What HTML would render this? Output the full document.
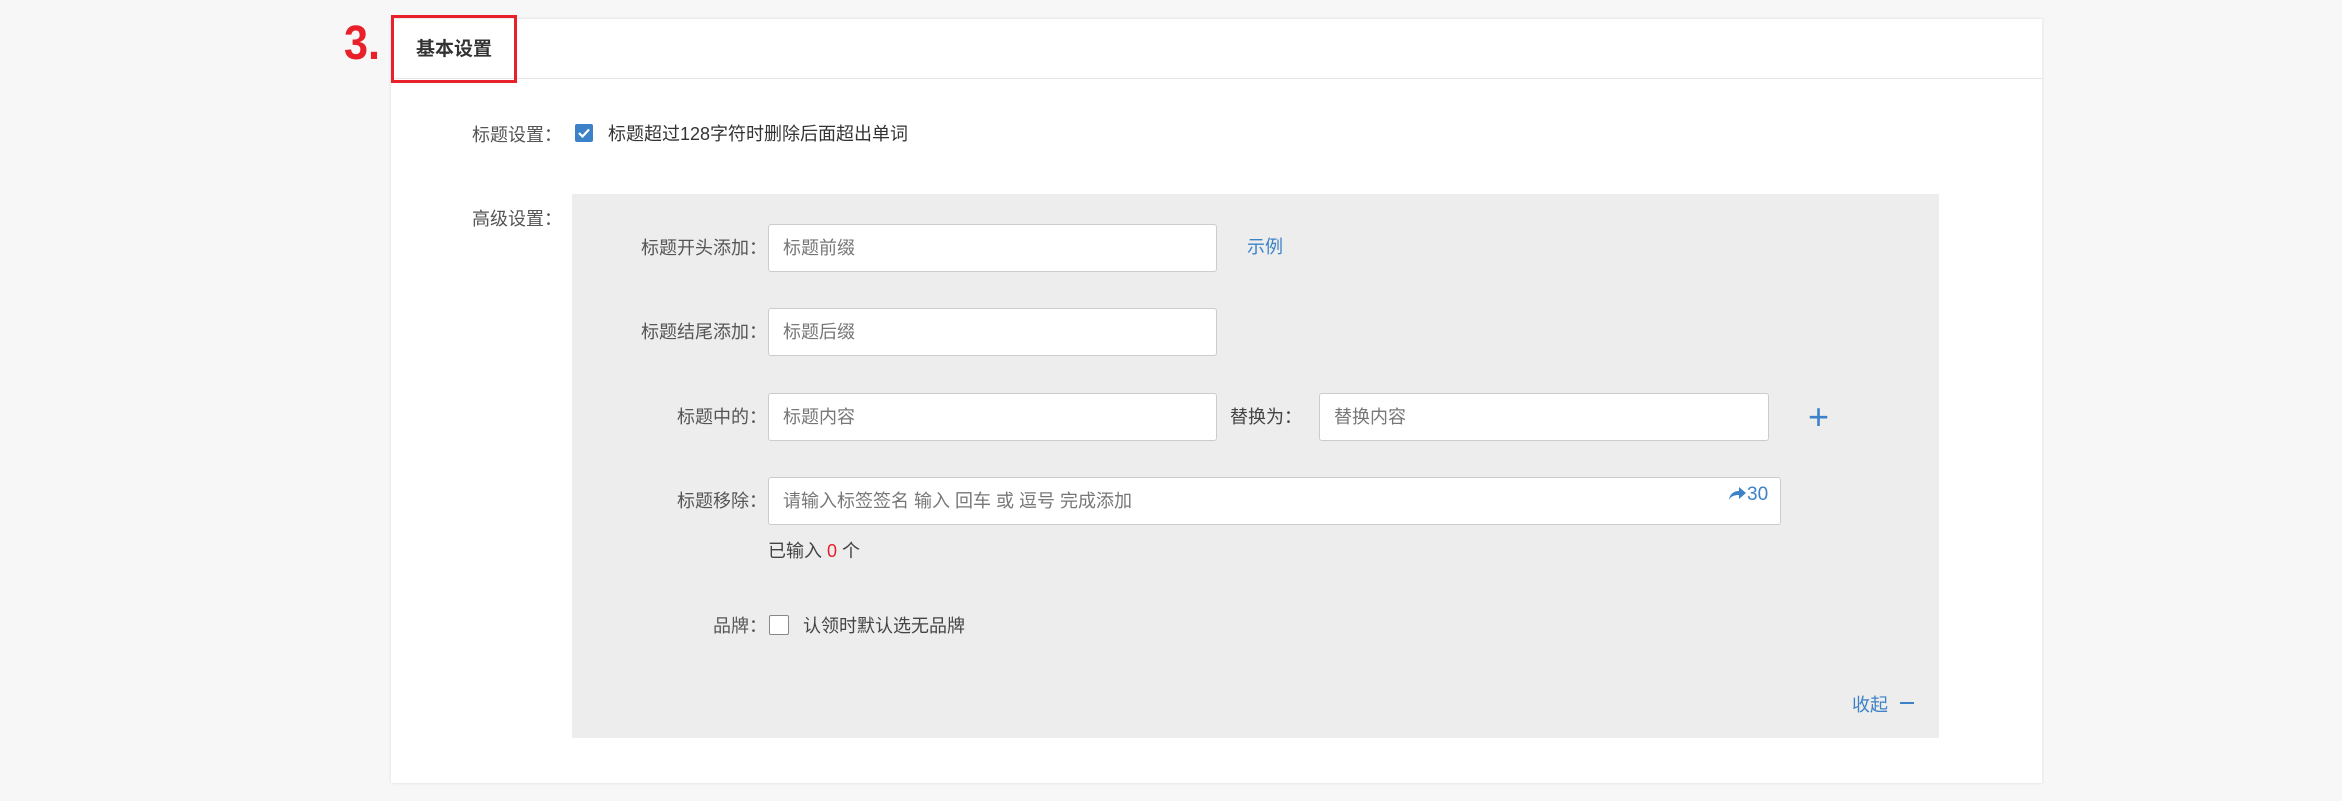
<!DOCTYPE html>
<html><head><meta charset="utf-8"><style>
body{margin:0;width:2342px;height:801px;background:#f7f7f7;font-family:"Liberation Sans","Noto Sans CJK SC",sans-serif;color:#555;position:relative;overflow:hidden;font-size:18px}
.a{position:absolute;white-space:nowrap}
.card{position:absolute;left:391px;top:19px;width:1651px;height:764px;background:#fff;box-shadow:0 0 3px rgba(0,0,0,.12)}
.hl{position:absolute;left:391px;top:78px;width:1651px;height:1px;background:#e5e5e5}
.red{position:absolute;left:391px;top:15px;width:120px;height:62px;border:3px solid #e8202a}
.panel{position:absolute;left:572px;top:194px;width:1367px;height:544px;background:#ededed}
.in{position:absolute;background:#fff;border:1px solid #ccc;border-radius:3px;height:48px;box-sizing:border-box;padding-left:14px;line-height:46px;color:#777}
.lb{position:absolute;width:200px;text-align:right;color:#555}
.blue{color:#3d82c8}
</style></head><body>
<div class="card"></div>
<div class="hl"></div>
<div class="red"></div>
<div class="a" style="left:344px;top:16px;font-size:48px;font-weight:bold;color:#e8202a;transform:scaleX(.9);transform-origin:left">3.</div>
<div class="a" style="left:416px;top:34px;font-size:19px;font-weight:bold;color:#333">基本设置</div>
<div class="a" style="left:472px;top:121px">标题设置：</div>
<div class="a" style="left:575px;top:124px;width:18px;height:18px;background:#3d82c8;border-radius:2px"><svg width="18" height="18"><path d="M4 9l3.5 3.5L14 5.5" stroke="#fff" stroke-width="2.2" fill="none"/></svg></div>
<div class="a" style="left:608px;top:120px;color:#333">标题超过128字符时删除后面超出单词</div>
<div class="a" style="left:472px;top:205px">高级设置：</div>
<div class="panel"></div>
<div class="lb" style="left:567px;top:234px">标题开头添加：</div>
<div class="in" style="left:768px;top:224px;width:449px">标题前缀</div>
<div class="a blue" style="left:1247px;top:233px">示例</div>
<div class="lb" style="left:567px;top:318px">标题结尾添加：</div>
<div class="in" style="left:768px;top:308px;width:449px">标题后缀</div>
<div class="lb" style="left:567px;top:403px">标题中的：</div>
<div class="in" style="left:768px;top:393px;width:449px">标题内容</div>
<div class="a" style="left:1230px;top:403px;color:#444">替换为：</div>
<div class="in" style="left:1319px;top:393px;width:450px">替换内容</div>
<div class="a blue" style="left:1808px;top:395px;font-size:36px;line-height:44px">+</div>
<div class="lb" style="left:567px;top:487px">标题移除：</div>
<div class="in" style="left:768px;top:477px;width:1013px">请输入标签签名 输入 回车 或 逗号 完成添加</div>
<div class="a blue" style="left:1727px;top:484px;font-size:19px"><svg width="20" height="16" style="vertical-align:-1px"><path d="M2 15C3 8 8 6 12 6V2l7 6-7 6v-4C8 10 4 11 2 15z" fill="#3d82c8"/></svg>30</div>
<div class="a" style="left:768px;top:537px;color:#444">已输入 <span style="color:#e8202a">0</span> 个</div>
<div class="lb" style="left:567px;top:612px">品牌：</div>
<div class="a" style="left:769px;top:615px;width:18px;height:18px;background:#fff;border:1px solid #888;border-radius:2px"></div>
<div class="a" style="left:803px;top:612px;color:#444">认领时默认选无品牌</div>
<div class="a blue" style="left:1852px;top:691px">收起</div>
<div class="a" style="left:1900px;top:702px;width:14px;height:2px;background:#3d82c8"></div>
</body></html>
